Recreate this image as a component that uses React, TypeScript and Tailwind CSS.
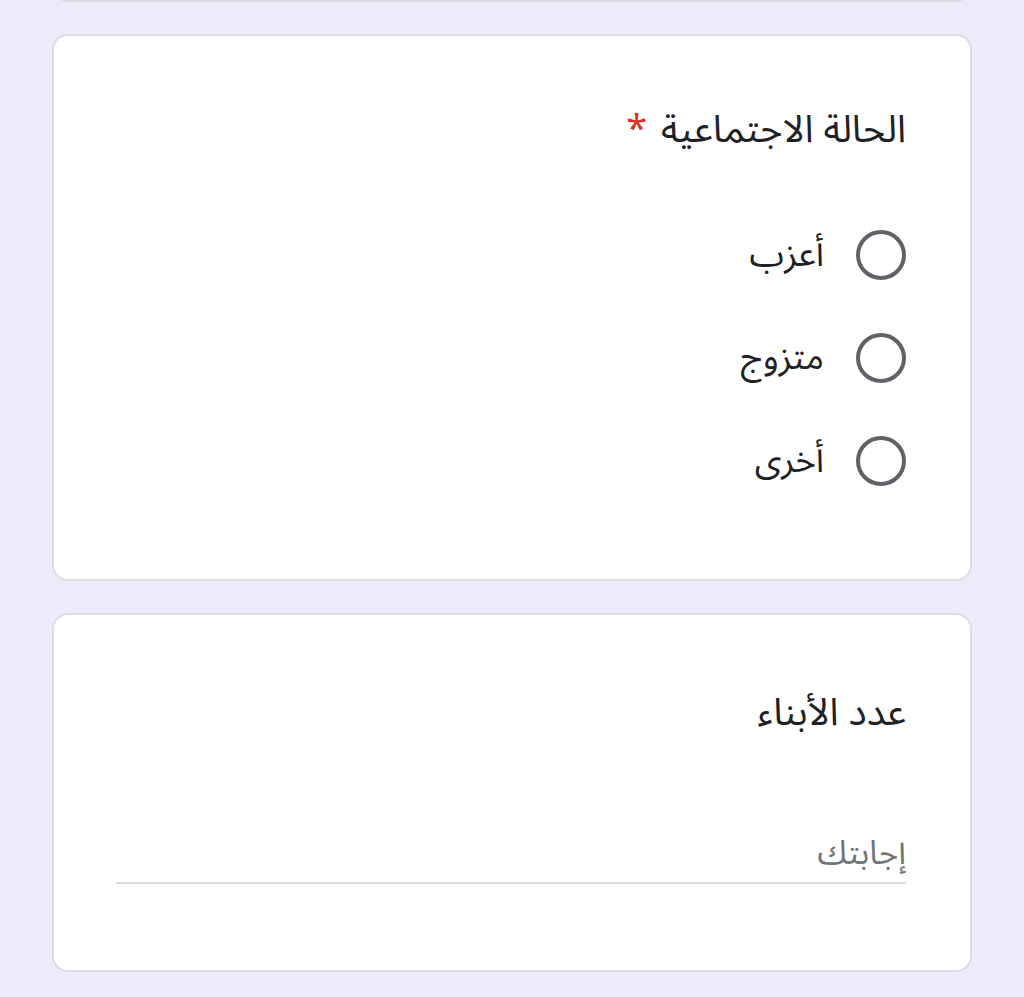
import { useState } from "react";

const options = ["أعزب", "متزوج", "أخرى"];

const Radio = ({ checked }: { checked: boolean }) => (
  <span className="flex h-[50px] w-[50px] shrink-0 items-center justify-center rounded-full border-[4px] border-[#5f6368]">
    {checked && <span className="h-[24px] w-[24px] rounded-full bg-[#5f6368]" />}
  </span>
);

const App = () => {
  const [status, setStatus] = useState<string | null>(null);
  const [kids, setKids] = useState("");

  return (
    <div
      dir="rtl"
      className="min-h-[997px] bg-[#ecebf9] px-[52px] text-[#202124]"
      style={{ fontFamily: '"Noto Sans Arabic", "Noto Sans", "DejaVu Sans", sans-serif' }}
    >
      <div className="flex flex-col gap-[32px]">
        {/* end of previous question card */}
        <div className="-mt-[16px] h-[18px] rounded-b-[16px] border-2 border-t-0 border-[#dddce6] bg-white" />

        <div className="rounded-[16px] border-2 border-[#dddce6] bg-white pr-[64px] pl-[62px] pt-[70px] pb-[90px]">
          <h2 className="text-[38px] leading-[48px]">
            الحالة الاجتماعية <span className="mr-[4px] text-[#d93025]">*</span>
          </h2>
          <div className="mt-[73px] flex flex-col gap-[47px]">
            {options.map((opt) => (
              <label
                key={opt}
                className="flex h-[56px] cursor-pointer items-center gap-[32px]"
                onClick={() => setStatus(opt)}
              >
                <Radio checked={status === opt} />
                <span className="text-[35px] leading-[56px]">{opt}</span>
              </label>
            ))}
          </div>
        </div>

        <div className="rounded-[16px] border-2 border-[#dddce6] bg-white pr-[64px] pl-[62px] pt-[74px] pb-[86px]">
          <h2 className="text-[38px] leading-[48px]">عدد الأبناء</h2>
          <div className="mt-[87px]">
            <input
              value={kids}
              onChange={(e) => setKids(e.target.value)}
              placeholder="إجابتك"
              className="block h-[60px] w-full border-b-2 border-[#dadce0] bg-transparent text-[33px] outline-none placeholder:text-[#70757a]"
            />
          </div>
        </div>
      </div>
    </div>
  );
};

export default App;
